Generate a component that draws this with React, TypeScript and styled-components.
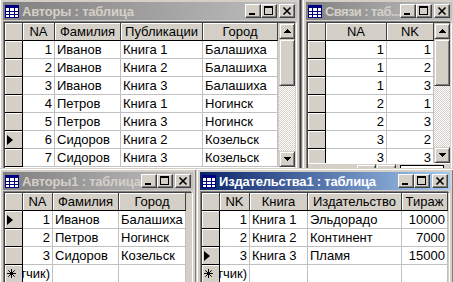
import styled, { createGlobalStyle } from 'styled-components';

const GlobalStyle = createGlobalStyle`
  html, body {
    margin: 0;
    padding: 0;
    background: #808080;
  }
  body {
    font-family: "Liberation Sans", Arial, sans-serif;
  }
`;

type Col = { title: string; width: number; right?: boolean };

type Win = {
  title: string;
  tight?: boolean;
  active?: boolean;
  x: number;
  y: number;
  w: number;
  z: number;
  viewH: number;
  cols: Col[];
  rows: string[][];
  current: number;
  newRow?: boolean;
  scroll?: boolean;
  nav?: boolean;
};

const windows: Win[] = [
  {
    title: 'Авторы : таблица',
    x: -1,
    y: -2,
    w: 302,
    z: 1,
    viewH: 144,
    cols: [
      { title: 'NA', width: 32, right: true },
      { title: 'Фамилия', width: 66 },
      { title: 'Публикации', width: 82 },
      { title: 'Город', width: 75 },
    ],
    rows: [
      ['1', 'Иванов', 'Книга 1', 'Балашиха'],
      ['2', 'Иванов', 'Книга 2', 'Балашиха'],
      ['3', 'Иванов', 'Книга 3', 'Балашиха'],
      ['4', 'Петров', 'Книга 1', 'Ногинск'],
      ['5', 'Петров', 'Книга 3', 'Ногинск'],
      ['6', 'Сидоров', 'Книга 2', 'Козельск'],
      ['7', 'Сидоров', 'Книга 3', 'Козельск'],
    ],
    current: 5,
    scroll: true,
    nav: true,
  },
  {
    title: 'Связи : таб...',
    tight: true,
    x: 302,
    y: -2,
    w: 154,
    z: 2,
    viewH: 140,
    cols: [
      { title: 'NA', width: 61, right: true },
      { title: 'NK', width: 47, right: true },
    ],
    rows: [
      ['1', '1'],
      ['1', '2'],
      ['1', '3'],
      ['2', '1'],
      ['2', '3'],
      ['3', '2'],
      ['3', '3'],
    ],
    current: -1,
    scroll: true,
    nav: true,
  },
  {
    title: 'Авторы1 : таблица',
    x: -1,
    y: 168,
    w: 198,
    z: 3,
    viewH: 110,
    cols: [
      { title: 'NA', width: 30, right: true },
      { title: 'Фамилия', width: 66 },
      { title: 'Город', width: 67 },
    ],
    rows: [
      ['1', 'Иванов', 'Балашиха'],
      ['2', 'Петров', 'Ногинск'],
      ['3', 'Сидоров', 'Козельск'],
    ],
    current: 0,
    newRow: true,
  },
  {
    title: 'Издательства1 : таблица',
    active: true,
    x: 196,
    y: 168,
    w: 258,
    z: 4,
    viewH: 110,
    cols: [
      { title: 'NK', width: 30, right: true },
      { title: 'Книга', width: 58 },
      { title: 'Издательство', width: 94 },
      { title: 'Тираж', width: 46, right: true },
    ],
    rows: [
      ['1', 'Книга 1', 'Эльдорадо', '10000'],
      ['2', 'Книга 2', 'Континент', '7000'],
      ['3', 'Книга 3', 'Пламя', '15000'],
    ],
    current: 2,
    newRow: true,
  },
];

const TableIcon = () => (
  <svg width="14" height="13" viewBox="0 0 14 13" shapeRendering="crispEdges">
    <rect x="0.5" y="0.5" width="13" height="12" fill="#fff" stroke="#000080" />
    <rect x="0" y="0" width="14" height="3" fill="#000080" />
    <path d="M4.5 3v10M9.5 3v10M0 6.5h14M0 9.5h14" stroke="#000080" />
  </svg>
);

const MinGlyph = () => (
  <svg width="14" height="12" viewBox="0 0 14 12" shapeRendering="crispEdges">
    <rect x="3" y="8" width="6" height="2" fill="#000" />
  </svg>
);

const MaxGlyph = () => (
  <svg width="14" height="12" viewBox="0 0 14 12" shapeRendering="crispEdges">
    <path d="M2 1h9v9H2zM3 3v6h7V3z" fill="#000" fillRule="evenodd" />
  </svg>
);

const CloseGlyph = () => (
  <svg width="14" height="12" viewBox="0 0 14 12">
    <path d="M3.5 2.5l7 7M10.5 2.5l-7 7" stroke="#000" strokeWidth="1.6" />
  </svg>
);

const ArrowGlyph = ({ down }: { down?: boolean }) => (
  <svg width="7" height="4" viewBox="0 0 7 4" shapeRendering="crispEdges">
    <path d={down ? 'M0 0h7L3.5 4z' : 'M0 4h7L3.5 0z'} fill="#000" />
  </svg>
);

const RowMarker = () => (
  <svg width="6" height="10" viewBox="0 0 6 10">
    <path d="M0 0l6 5-6 5z" fill="#000" />
  </svg>
);

const NewMarker = () => (
  <svg width="9" height="9" viewBox="0 0 9 9">
    <path d="M4.5 0v9M0 4.5h9M1.3 1.3l6.4 6.4M7.7 1.3l-6.4 6.4" stroke="#000" strokeWidth="1" />
  </svg>
);

const Desktop = styled.div`
  position: relative;
  width: 453px;
  height: 282px;
  overflow: hidden;
  background: #808080;
`;

const Window = styled.div<{ $x: number; $y: number; $w: number; $z: number }>`
  position: absolute;
  left: ${(p) => p.$x}px;
  top: ${(p) => p.$y}px;
  width: ${(p) => p.$w}px;
  z-index: ${(p) => p.$z};
  box-sizing: border-box;
  padding: 3px;
  background: #d4d0c8;
  border: 1px solid;
  border-color: #d4d0c8 #404040 #404040 #d4d0c8;
  box-shadow: inset 1px 1px #fff, inset -1px -1px #808080;
  display: flex;
  flex-direction: column;
`;

const Caption = styled.div<{ $active?: boolean }>`
  height: 18px;
  flex: none;
  display: flex;
  align-items: center;
  padding: 0 2px;
  background: ${(p) =>
    p.$active
      ? 'linear-gradient(90deg, #0a246a, #a6caf0)'
      : 'linear-gradient(90deg, #808080, #c0c0c0)'};
  color: ${(p) => (p.$active ? '#fff' : '#d4d0c8')};
  font: bold 13px "Liberation Sans", Arial, sans-serif;
`;

const CaptionTitle = styled.span<{ $tight?: boolean }>`
  flex: 1;
  margin-left: 3px;
  letter-spacing: ${(p) => (p.$tight ? '-0.6px' : '-0.2px')};
  white-space: nowrap;
  overflow: hidden;
`;

const CapBtn = styled.div<{ $gap?: boolean }>`
  width: 16px;
  height: 14px;
  flex: none;
  box-sizing: border-box;
  margin-left: ${(p) => (p.$gap ? 2 : 0)}px;
  background: #d4d0c8;
  border: 1px solid;
  border-color: #fff #404040 #404040 #fff;
  box-shadow: inset -1px -1px #808080;
  display: flex;
`;

const Sheet = styled.div`
  margin: 2px 1px 1px;
  border: 1px solid;
  border-color: #404040 #d4d0c8 #d4d0c8 #404040;
  box-shadow: -1px -1px #808080, 1px 1px #fff;
  display: flex;
  flex-direction: column;
`;

const Viewport = styled.div<{ $h: number }>`
  height: ${(p) => p.$h}px;
  display: flex;
  background: #d4d0c8;
  overflow: hidden;
`;

const Grid = styled.div<{ $cols: string }>`
  flex: 1;
  display: grid;
  grid-template-columns: ${(p) => p.$cols};
  grid-auto-rows: 18px;
  align-content: start;
  font-size: 13px;
  line-height: 17px;
  color: #000;
`;

const HeadCell = styled.div`
  box-sizing: border-box;
  background: #d4d0c8;
  border-right: 1px solid #404040;
  border-bottom: 1px solid #000;
  box-shadow: inset 1px 1px #fff;
  text-align: center;
  white-space: nowrap;
  overflow: hidden;
`;

const SelCell = styled.div`
  box-sizing: border-box;
  background: #d4d0c8;
  border-right: 1px solid #000;
  border-bottom: 1px solid #000;
  box-shadow: inset 1px 1px #fff;
  display: flex;
  align-items: center;
  padding-left: 2px;
`;

const Cell = styled.div<{ $right?: boolean }>`
  box-sizing: border-box;
  background: #fff;
  border-right: 1px solid #c0c0c0;
  border-bottom: 1px solid #c0c0c0;
  padding: 0 2px;
  white-space: nowrap;
  overflow: hidden;
  display: flex;
  justify-content: ${(p) => (p.$right ? 'flex-end' : 'flex-start')};
`;

const VScroll = styled.div`
  width: 16px;
  flex: none;
  display: flex;
  flex-direction: column;
  background: repeating-conic-gradient(#d4d0c8 0 25%, #fff 0 50%) 0 0 / 2px 2px;
`;

const Raised = styled.div<{ $h: number }>`
  height: ${(p) => p.$h}px;
  flex: none;
  box-sizing: border-box;
  background: #d4d0c8;
  border: 1px solid;
  border-color: #d4d0c8 #404040 #404040 #d4d0c8;
  box-shadow: inset 1px 1px #fff, inset -1px -1px #808080;
  display: flex;
  align-items: center;
  justify-content: center;
`;

const Track = styled.div`
  flex: 1;
`;

const NavBar = styled.div`
  height: 16px;
  display: flex;
  align-items: center;
  background: #d4d0c8;
  border-top: 1px solid #fff;
`;

const NavSpacer = styled.div`
  width: 48px;
  flex: none;
`;

const NavBtn = styled(Raised)`
  width: 20px;
`;

const NavField = styled.div`
  width: 44px;
  height: 15px;
  margin-left: 4px;
  box-sizing: border-box;
  background: #fff;
  border: 1px solid #000;
`;

const DataWindow = ({ win }: { win: Win }) => {
  const cols = ['18px', ...win.cols.map((c) => `${c.width}px`)].join(' ');
  return (
    <Window $x={win.x} $y={win.y} $w={win.w} $z={win.z}>
      <Caption $active={win.active}>
        <TableIcon />
        <CaptionTitle $tight={win.tight}>{win.title}</CaptionTitle>
        <CapBtn>
          <MinGlyph />
        </CapBtn>
        <CapBtn>
          <MaxGlyph />
        </CapBtn>
        <CapBtn $gap>
          <CloseGlyph />
        </CapBtn>
      </Caption>
      <Sheet>
        <Viewport $h={win.viewH}>
          <Grid $cols={cols}>
            <HeadCell />
            {win.cols.map((c) => (
              <HeadCell key={c.title}>{c.title}</HeadCell>
            ))}
            {win.rows.map((row, i) => [
              <SelCell key={`s${i}`}>{i === win.current && <RowMarker />}</SelCell>,
              ...row.map((v, j) => (
                <Cell key={`${i}-${j}`} $right={win.cols[j].right}>
                  {v}
                </Cell>
              )),
            ])}
            {win.newRow && [
              <SelCell key="ns">
                <NewMarker />
              </SelCell>,
              ...win.cols.map((c, j) => (
                <Cell key={`n${j}`} $right={c.right}>
                  {j === 0 ? '(Счетчик)' : ''}
                </Cell>
              )),
            ]}
          </Grid>
          {win.scroll && (
            <VScroll>
              <Raised $h={16}>
                <ArrowGlyph />
              </Raised>
              <Raised $h={47} />
              <Track />
              <Raised $h={16}>
                <ArrowGlyph down />
              </Raised>
            </VScroll>
          )}
        </Viewport>
        {win.nav && (
          <NavBar>
            <NavSpacer />
            <NavBtn $h={16} />
            <NavBtn $h={16} />
            <NavField />
          </NavBar>
        )}
      </Sheet>
    </Window>
  );
};

export default function App() {
  return (
    <>
      <GlobalStyle />
      <Desktop>
        {windows.map((w) => (
          <DataWindow key={w.title} win={w} />
        ))}
      </Desktop>
    </>
  );
}
